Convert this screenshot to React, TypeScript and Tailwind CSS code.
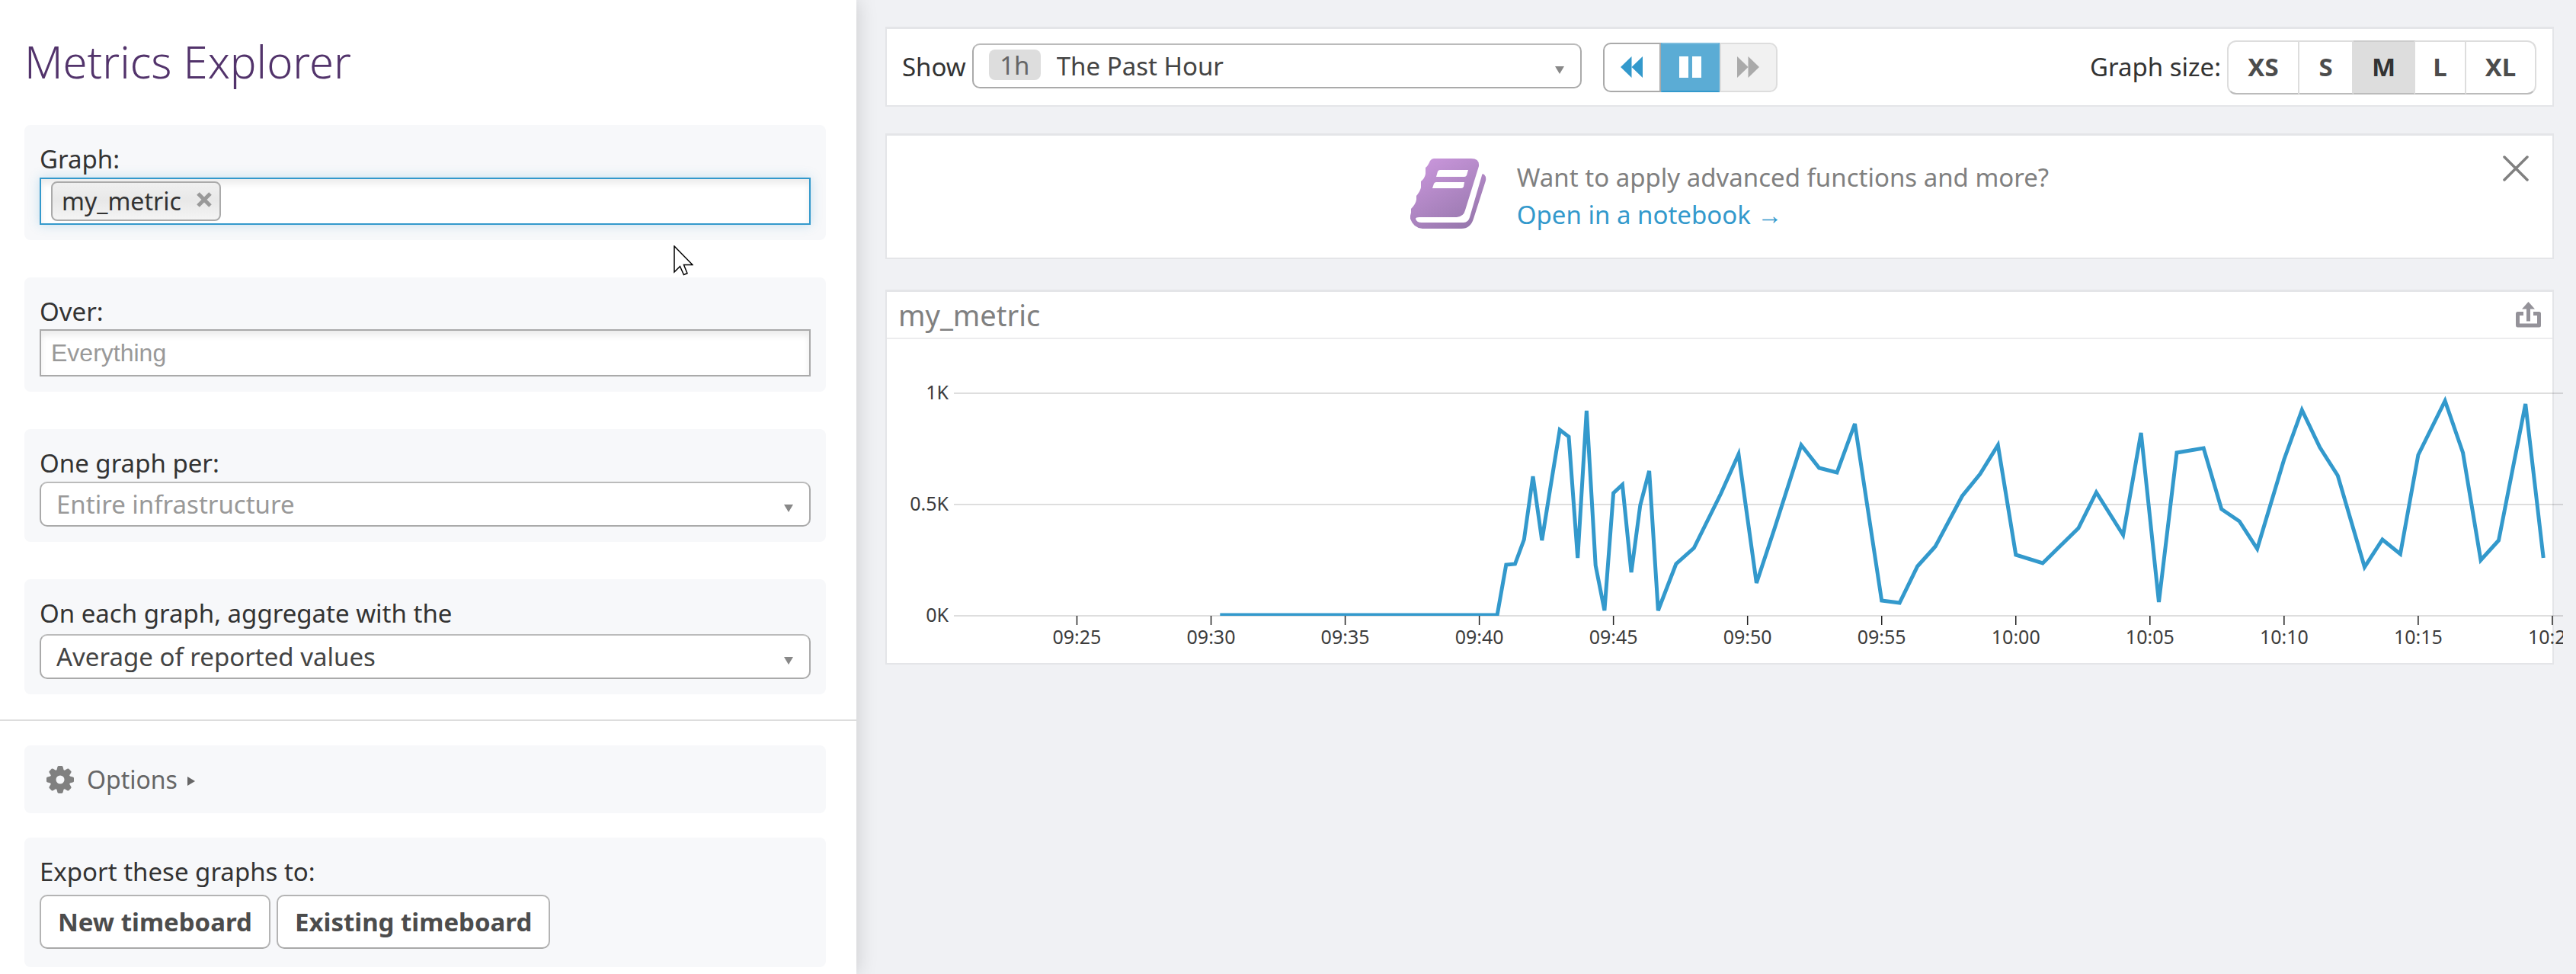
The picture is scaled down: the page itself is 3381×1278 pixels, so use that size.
import { useId } from "react";
import type { ReactNode } from "react";

/* Samples of the series: [20-second steps after 09:40, y on the canvas]. */
const SAMPLES: [number, number][] = [
  [-29, 807], [2, 807], [3, 741], [4, 740], [5, 708], [6, 625], [7, 709], [8, 636], [9, 564], [10, 573],
  [11, 732], [12, 539], [13, 742], [14, 801], [15, 647], [16, 636], [17, 751], [18, 663], [19, 618], [20, 801],
  [22, 740], [24, 719], [27, 648], [29, 596], [31, 765], [33, 694], [36, 584], [38, 614], [40, 620], [42, 556],
  [45, 788], [47, 791], [49, 743], [51, 717], [54, 651], [56, 622], [58, 584], [60, 728], [63, 739], [67, 693],
  [69, 646], [72, 702], [74, 568], [76, 790], [78, 594], [81, 588], [83, 668], [85, 684], [87, 720], [90, 603],
  [92, 538], [94, 587], [96, 624], [99, 744], [101, 708], [103, 727], [105, 597], [108, 526], [110, 594],
  [112, 735], [114, 709], [117, 530], [119, 732],
];

const STEP = 11.736;
const ORIGIN = 1941.6;
const TIMES = ["09:25", "09:30", "09:35", "09:40", "09:45", "09:50", "09:55", "10:00", "10:05", "10:10", "10:15", "10:20"];
const LEVELS = [
  { label: "1K", y: 516 },
  { label: "0.5K", y: 662 },
  { label: "0K", y: 808 },
];

function Chart() {
  const points = SAMPLES.map(([t, y]) => `${(ORIGIN + t * STEP).toFixed(1)},${y}`).join(" ");
  return (
    <svg viewBox="1164 445 2200 425" className="block w-[calc(100%+14px)] max-w-none" role="img" aria-label="my_metric over time">
      <clipPath id="plot">
        <rect x="1252" y="445" width="2112" height="363" />
      </clipPath>
      {LEVELS.map((l) => (
        <g key={l.label}>
          <rect x="1252" y={l.y - 1} width="2112" height="2" fill="#000" fillOpacity="0.13" />
          <text x="1245" y={l.y + 8} textAnchor="end" fontSize="25" fill="#3c3c3c">{l.label}</text>
        </g>
      ))}
      <polyline points={points} clipPath="url(#plot)" fill="none" stroke="#3399cc" strokeWidth="5" />
      {TIMES.map((time, i) => {
        const x = ORIGIN + (i - 3) * 15 * STEP;
        return (
          <g key={time}>
            <line x1={x} x2={x} y1="808" y2="820" stroke="#222" strokeWidth="1.5" />
            <text x={x} y="845" textAnchor="middle" fontSize="25" fill="#3c3c3c">{time}</text>
          </g>
        );
      })}
    </svg>
  );
}

function Card({ children, className = "" }: { children: ReactNode; className?: string }) {
  return <div className={`rounded-lg bg-[#f7f8fa] px-5 pt-[22px] pb-5 ${className}`}>{children}</div>;
}

function Caret() {
  return (
    <svg viewBox="0 0 12 10" className="pointer-events-none absolute top-[30px] right-[23px] h-[10px] w-3" aria-hidden="true">
      <path d="M0 0h12L6 10z" fill="#888" />
    </svg>
  );
}

function SelectBox({ id, value, className }: { id: string; value: string; className: string }) {
  return (
    <>
      <select
        id={id}
        className={`h-[59px] w-full appearance-none rounded-[10px] border-2 border-[#aaa] border-t-[#bbb] bg-white pr-14 leading-[45px] ${className}`}
      >
        <option>{value}</option>
      </select>
      <Caret />
    </>
  );
}

function SelectCard({ label, value, className, gap }: { label: string; value: string; className: string; gap: string }) {
  const id = useId();
  return (
    <Card>
      <label htmlFor={id} className={`block leading-[45px] ${gap}`}>{label}</label>
      <div className="relative">
        <SelectBox id={id} value={value} className={`pl-5 ${className}`} />
      </div>
    </Card>
  );
}

function Gear() {
  return (
    <svg viewBox="-18 -18 36 36" className="h-9 w-9" aria-hidden="true">
      <circle r="9.5" fill="none" stroke="#808080" strokeWidth="8" />
      {[0, 45, 90, 135, 180, 225, 270, 315].map((a) => (
        <path key={a} transform={`rotate(${a})`} d="M-5 -11L-3.6 -16.6Q-3.2 -18 -2 -18H2Q3.2 -18 3.6 -16.6L5 -11z" fill="#808080" />
      ))}
    </svg>
  );
}

function Notebook() {
  return (
    <svg viewBox="0 0 100 92" className="h-[92px] w-[100px]" aria-hidden="true">
      <defs>
        <linearGradient id="cover" x1="0.2" y1="0" x2="0.8" y2="1">
          <stop offset="0" stopColor="#c996db" />
          <stop offset="1" stopColor="#9677ac" />
        </linearGradient>
      </defs>
      <path
        fill="url(#cover)"
        fillRule="evenodd"
        d="M31 0H80Q91 0 90 10L72 68Q70 76 61 77H12Q7 77 7 79Q8 84 15 84H70Q76 84 78 77L94 22Q94 19 97 21Q100 24 99 29L83 79Q79 92 67 92H16Q4 91 0 79V75L1 71V66Q7 60 8 54V49Q13 43 14 38V30Q19 26 20 20V12Q23 10 26 3Q28 0 31 0ZM39 15Q37 15 36 17L34 24H71Q73 24 74 22L76 15ZM34 31Q32 31 31 33L29 39H67Q69 39 70 37L71 31Z"
      />
    </svg>
  );
}

function Share() {
  return (
    <svg viewBox="0 0 33 34" className="h-[34px] w-[33px]" aria-hidden="true">
      <path d="M10 15.500H2.500V31H30.500V15.500H23" fill="none" stroke="#949299" strokeWidth="5" strokeLinejoin="round" />
      <path d="M16.500 0L25 9.500H19V25.500H14V9.500H8z" fill="#949299" />
    </svg>
  );
}

const PANEL = "border-2 border-t-[3px] border-[#e4e5e8] bg-white";

const SIZES = [
  { name: "XS", style: "w-[95px] rounded-l-xl border-l-2" },
  { name: "S", style: "w-[71px]" },
  { name: "M", style: "w-[81px] bg-[#ddd] border-t-[#ccc] border-b-[#999] text-[#333]" },
  { name: "L", style: "w-[67px]" },
  { name: "XL", style: "w-[92px] rounded-r-xl" },
];

export default function App() {
  return (
    <div className="flex min-h-screen bg-[#f0f1f4] font-['Noto_Sans',sans-serif] text-[33px] text-[#333]">
      <aside className="relative z-10 w-[1124px] shrink-0 bg-white shadow-[0_0_26px_rgba(0,0,0,0.17)]">
        <section className="border-b-2 border-[#ddd] pt-[42px] pr-10 pb-[33px] pl-8">
          <h1 className="mb-11 text-[58px] leading-[78px] font-light text-[#52336b]">Metrics Explorer</h1>
          <div className="flex flex-col gap-[49px]">
            <Card>
              <label htmlFor="graph" className="mb-[2px] block leading-[45px]">Graph:</label>
              <div className="flex h-[62px] items-center gap-2 border-2 border-[#3399cc] bg-white px-[13px] shadow-[0_0_14px_rgba(51,153,204,0.25),inset_0_6px_8px_rgba(0,0,0,0.08)]">
                <span className="flex h-[52px] items-center gap-5 rounded-lg border-2 border-[#aaa] bg-linear-to-b from-[#f0f0f0] via-[#e8e8e8] to-[#f4f4f4] pr-[10px] pl-3 text-[32px] leading-[44px]">
                  my_metric
                  <button type="button" aria-label="Remove my_metric" className="mb-1">
                    <svg viewBox="0 0 20 20" className="h-5 w-5" aria-hidden="true">
                      <path d="M2 2L18 18M18 2L2 18" stroke="#999" strokeWidth="5" />
                    </svg>
                  </button>
                </span>
                <input id="graph" type="text" className="min-w-0 flex-1 bg-transparent outline-none" />
              </div>
            </Card>
            <Card>
              <label htmlFor="over" className="mb-px block leading-[45px]">Over:</label>
              <input
                id="over"
                type="text"
                placeholder="Everything"
                className="block h-[62px] w-full border-2 border-[#aaa] bg-white px-[13px] font-['Liberation_Sans',sans-serif] text-[32px] shadow-[inset_0_6px_8px_rgba(0,0,0,0.08)] outline-none placeholder:text-[#999]"
              />
            </Card>
            <SelectCard label="One graph per:" value="Entire infrastructure" className="text-[#999]" gap="mb-[2px]" />
            <SelectCard label="On each graph, aggregate with the" value="Average of reported values" className="text-[#444]" gap="mb-[5px]" />
          </div>
        </section>

        <section className="flex flex-col gap-8 pt-8 pr-10 pb-2 pl-8">
          <button type="button" className="flex h-[89px] items-center rounded-lg bg-[#f7f8fa] pl-[29px] text-[32px] text-[#666]">
            <Gear />
            <span className="ml-[17px]">Options</span>
            <svg viewBox="0 0 10 12" className="mt-1 ml-[13px] h-3 w-[10px]" aria-hidden="true">
              <path d="M0 0L10 6L0 12z" fill="#666" />
            </svg>
          </button>
          <Card>
            <p className="mb-2 leading-[45px]">Export these graphs to:</p>
            <div className="mb-1 flex gap-2">
              {["New timeboard", "Existing timeboard"].map((name) => (
                <button key={name} type="button" className="h-[71px] rounded-[10px] border-2 border-[#b4b4b4] border-b-[#a9a9a9] bg-white px-[22px] font-bold text-[#4c4c4c]">
                  {name}
                </button>
              ))}
            </div>
          </Card>
        </section>
      </aside>

      <main className="min-w-0 flex-1 pt-[35px] pr-[29px] pl-[38px]">
        <div className={`mb-[35px] flex h-[105px] items-center justify-between pr-[21px] pl-5 ${PANEL}`}>
          <div className="flex items-center">
            <label htmlFor="range" className="mr-2">Show</label>
            <div className="relative mb-1 w-[800px]">
              <SelectBox id="range" value="The Past Hour" className="pl-[109px] text-[#444]" />
              <span className="pointer-events-none absolute top-2 left-[22px] h-10 w-[68px] rounded-lg bg-[#ddd] text-center leading-[42px] text-[#666]">1h</span>
            </div>
            <div className="ml-7 flex h-[65px]">
              <button type="button" aria-label="Back" className="flex w-[76px] items-center justify-center rounded-l-[10px] border-2 border-[#aaa] bg-white">
                <svg viewBox="0 0 29 28" className="h-7 w-[29px]" aria-hidden="true">
                  <path d="M0 14L14.500 0V14L29 0V28L14.500 14V28z" fill="#3399cc" />
                </svg>
              </button>
              <button type="button" aria-label="Pause" className="flex w-[77px] items-center justify-center border-2 border-[#5bacd5] border-t-[#7bbcdd] border-b-[#3399cc] bg-[#5bacd5]">
                <svg viewBox="0 0 29 28" className="h-7 w-[29px]" aria-hidden="true">
                  <path d="M0 0H12V28H0zM17 0H29V28H17z" fill="#fff" />
                </svg>
              </button>
              <button type="button" aria-label="Forward" disabled className="flex w-[76px] items-center justify-center rounded-r-[10px] border-2 border-[#ddd] bg-[#f1f1f1]">
                <svg viewBox="0 0 29 28" className="h-7 w-[29px]" aria-hidden="true">
                  <path d="M0 0L14.500 14V0L29 14L14.500 28V14L0 28z" fill="#aaa" />
                </svg>
              </button>
            </div>
          </div>
          <div className="flex items-center">
            <span className="mr-2">Graph size:</span>
            {SIZES.map((s) => (
              <button key={s.name} type="button" className={`h-[71px] border-y-2 border-r-2 border-[#ddd] border-b-[#bbb] font-bold text-[#4c4c4c] ${s.style}`}>
                {s.name}
              </button>
            ))}
          </div>
        </div>

        <div className={`relative mb-10 flex h-[165px] justify-center gap-10 pt-[30px] pl-[26px] ${PANEL}`}>
          <Notebook />
          <div className="leading-[49px]">
            <p className="text-[#808080]">Want to apply advanced functions and more?</p>
            <a href="#notebook" className="text-[#3399cc]">Open in a notebook →</a>
          </div>
          <button type="button" aria-label="Close" className="absolute top-[26px] right-[31px]">
            <svg viewBox="0 0 34 34" className="h-[34px] w-[34px]" aria-hidden="true">
              <path d="M2 2L32 32M32 2L2 32" stroke="#808080" strokeWidth="3.500" strokeLinecap="round" />
            </svg>
          </button>
        </div>

        <div className={PANEL}>
          <div className="flex h-[62px] items-center justify-between border-b-2 border-[#ececee] pr-[15px] pl-[15px]">
            <h2 className="text-[38px] leading-[52px] text-[#808080]">my_metric</h2>
            <button type="button" aria-label="Share">
              <Share />
            </button>
          </div>
          <Chart />
        </div>
      </main>

      <svg viewBox="0 0 26 40" className="pointer-events-none absolute top-[322px] left-[884px] z-20 h-10 w-[26px]" aria-hidden="true">
        <path d="M1 1V35L8.500 27.500L13.500 38.500L18 36.500L13.500 25.500H25z" fill="#fff" stroke="#000" strokeWidth="1.500" />
      </svg>
    </div>
  );
}
